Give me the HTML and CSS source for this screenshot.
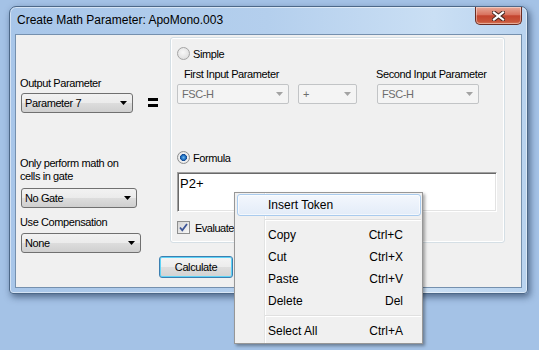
FILE: index.html
```html
<!DOCTYPE html>
<html>
<head>
	<meta charset="utf-8">
	<title>Create Math Parameter</title>
	<link rel="stylesheet" href="styles.css">
</head>
<body>
  <div class="window">
    <div class="titlebar">
      <span class="title">Create Math Parameter: ApoMono.003</span>
      <div class="close">
        <svg width="13" height="10" viewBox="0 0 13 10">
          <path d="M2 1.5 L11 8.5 M11 1.5 L2 8.5" stroke="#4a2a24" stroke-width="4.2" stroke-linecap="square"/>
          <path d="M2 1.5 L11 8.5 M11 1.5 L2 8.5" stroke="#fff" stroke-width="2.2" stroke-linecap="square"/>
        </svg>
      </div>
    </div>

    <div class="client">
      <div class="top_row">
        <div class="left_col">
          <div class="label output_label">Output Parameter</div>
          <div class="combo combo_output">Parameter 7</div>
          <div class="label gate_label">Only perform math on<br>cells in gate</div>
          <div class="combo combo_gate">No Gate</div>
          <div class="label comp_label">Use Compensation</div>
          <div class="combo combo_comp">None</div>
        </div>

        <div class="equals_col"><div class="equals"></div></div>

        <div class="group">
          <div class="radio_row">
            <span class="radio"></span>
            <span>Simple</span>
          </div>
          <div class="input_grid">
            <div class="label first_input">First Input Parameter</div>
            <div class="label second_input">Second Input Parameter</div>
            <div class="combo disabled">FSC-H</div>
            <div class="combo disabled">+</div>
            <div class="combo disabled">FSC-H</div>
          </div>
          <div class="radio_row formula_row">
            <span class="radio checked"></span>
            <span>Formula</span>
          </div>
          <div class="textbox">P2+</div>
          <div class="check_row">
            <span class="checkbox">
              <svg width="11" height="11" viewBox="0 0 11 11">
                <path d="M2 5.5 L4.3 8.3 L9 2" fill="none" stroke="#3d5597" stroke-width="1.8"/>
              </svg>
            </span>
            <span class="check_text">Evaluate</span>
          </div>
        </div>
      </div>

      <div class="button_row">
        <div class="btn">Calculate</div>
      </div>
    </div>
  </div>

  <!-- right click menu on the formula box -->
  <div class="menu">
    <div class="menu_item hover"><span>Insert Token</span></div>
    <div class="menu_sep"></div>
    <div class="menu_item"><span>Copy</span><span>Ctrl+C</span></div>
    <div class="menu_item"><span>Cut</span><span>Ctrl+X</span></div>
    <div class="menu_item"><span>Paste</span><span>Ctrl+V</span></div>
    <div class="menu_item"><span>Delete</span><span>Del</span></div>
    <div class="menu_sep"></div>
    <div class="menu_item"><span>Select All</span><span>Ctrl+A</span></div>
  </div>
</body>
</html>
```

FILE: styles.css
```css
body {
	margin: 0;
	width: 539px;
	height: 350px;
	overflow: hidden;
	position: relative;
	background-color: #a4c2e6;
	font-family: "Liberation Sans", Arial, sans-serif;
	color: #000;
}

/* window frame */
.window {
	position: absolute;
	left: 9px;
	top: 6px;
	width: 519px;
	height: 288px;
	box-sizing: border-box;
	border: 1px solid #4d6888;
	border-radius: 7px 7px 4px 4px;
	background: linear-gradient(to right, #a8c6e9 0%, #b4cfed 50%, #cadff4 82%, #b9d3ef 100%);
	box-shadow: 2px 3px 7px rgba(10, 30, 60, 0.55), inset 0 0 0 1px rgba(255, 255, 255, 0.5);
	display: flex;
	flex-direction: column;
}

.titlebar {
	height: 28px;
	display: flex;
	align-items: flex-start;
}

.title {
	margin: 6px 0 0 7px;
	font-size: 12px;
	line-height: 14px;
}

.close {
	margin-left: auto;
	margin-right: 5px;
	width: 47px;
	height: 18px;
	box-sizing: border-box;
	border: 1px solid #6b2c22;
	border-top: none;
	border-radius: 0 0 5px 5px;
	background: linear-gradient(#e7a897 0%, #d9735f 45%, #c4442e 52%, #c8553a 85%, #d87a5a 100%);
	box-shadow: inset 0 0 0 1px rgba(255, 255, 255, 0.4);
	display: flex;
	align-items: center;
	justify-content: center;
}

.client {
	margin: 0 6px;
	height: 252px;
	background-color: #f0f0f0;
	box-shadow: 0 0 0 1px #7590ae;
	display: flex;
	flex-direction: column;
	font-size: 11px;
	letter-spacing: -0.4px;
}

.top_row {
	display: flex;
	height: 218px;
}

.left_col {
	width: 131px;
	box-sizing: border-box;
	padding-left: 4px;
}

.label {
	line-height: 13px;
	white-space: nowrap;
}

.output_label { margin-top: 42px; }
.gate_label { margin-top: 44px; }
.comp_label { margin-top: 8px; }

/* combo boxes */
.combo {
	position: relative;
	height: 20px;
	box-sizing: border-box;
	border: 1px solid #707070;
	border-radius: 3px;
	padding-left: 3px;
	line-height: 18px;
	background: linear-gradient(#f2f2f2 0%, #ebebeb 50%, #dddddd 50%, #cfcfcf 100%);
	white-space: nowrap;
}

.combo::after {
	content: "";
	position: absolute;
	right: 5px;
	top: 7px;
	width: 7px;
	height: 4px;
	background: #000;
	clip-path: polygon(0 0, 100% 0, 50% 100%);
}

.combo_output { margin: 3px 0 0 1px; width: 112px; }
.combo_gate { margin: 5px 0 0 1px; width: 116px; }
.combo_comp { margin: 4px 0 0 1px; width: 120px; }

.combo.disabled {
	border-color: #c2c4c6;
	border-radius: 2px;
	background: #f4f4f4;
	color: #6d6d6d;
	padding-left: 4px;
}

.combo.disabled::after {
	background: #a3a3a3;
}

.equals_col {
	width: 23px;
}

.equals {
	margin: 63px 0 0 1px;
	width: 10px;
	height: 3px;
	border-top: 3px solid #000;
	border-bottom: 3px solid #000;
}

/* right hand group box */
.group {
	margin-top: 2px;
	width: 335px;
	height: 206px;
	box-sizing: border-box;
	border: 1px solid #d5dfe5;
	border-radius: 3px;
	box-shadow: inset 0 0 0 1px #fff;
	padding-left: 6px;
}

.radio_row {
	display: flex;
	align-items: center;
	gap: 3px;
	height: 13px;
	margin-top: 9px;
}

.formula_row { margin-top: 47px; }

.radio {
	width: 13px;
	height: 13px;
	box-sizing: border-box;
	border: 1px solid #a4a4a4;
	border-radius: 50%;
	background: radial-gradient(circle at 45% 40%, #f8f8f8 0%, #e6e6e6 55%, #d6d6d6 100%);
}

.radio.checked {
	border-color: #8e8f8f;
	background: radial-gradient(circle, #6fb8ee 0%, #1f6fc0 28%, #14488f 42%, #f2f2f2 48%, #d8d8d8 100%);
}

.input_grid {
	display: grid;
	grid-template-columns: 112px 59px 113px;
	column-gap: 9px;
	margin-top: 8px;
}

.input_grid .combo {
	margin-top: 3px;
}

.input_grid .combo:nth-child(5) {
	margin-left: 11px;
}

.first_input {
	grid-column: 1 / 3;
	margin-left: 7px;
}

.second_input {
	margin-left: 10px;
}

.textbox {
	margin-top: 8px;
	width: 320px;
	height: 40px;
	box-sizing: border-box;
	border: 1px solid;
	border-color: #a0a0a0 #fff #fff #a0a0a0;
	box-shadow: inset 1px 1px #696969, inset -1px -1px #e3e3e3;
	background: #fff;
	padding: 3px 2px;
	font-size: 13px;
	line-height: 15px;
	letter-spacing: 0;
}

.check_row {
	display: flex;
	align-items: center;
	gap: 5px;
	margin-top: 9px;
	height: 13px;
}

.check_text {
	white-space: nowrap;
	letter-spacing: -0.5px;
}

.checkbox {
	width: 13px;
	height: 13px;
	box-sizing: border-box;
	border: 1px solid #8e8f8f;
	background: linear-gradient(135deg, #d4d4d4, #f8f8f8);
	display: flex;
	align-items: center;
	justify-content: center;
}

.button_row {
	padding-left: 143px;
	margin-top: 3px;
}

.btn {
	width: 74px;
	height: 22px;
	box-sizing: border-box;
	border: 1px solid #3c7fb1;
	border-radius: 3px;
	box-shadow: inset 0 0 0 1px #5fd3f6;
	background: linear-gradient(#f4f4f4 0%, #ececec 50%, #dedede 50%, #d2d2d2 100%);
	text-align: center;
	line-height: 20px;
}

/* context menu */
.menu {
	position: absolute;
	left: 234px;
	top: 192px;
	width: 189px;
	box-sizing: border-box;
	border: 1px solid #979797;
	padding: 1px 1px 1px 2px;
	background-color: #f0f0f0;
	background-image: linear-gradient(to right, transparent 29px, #e2e3e3 29px, #e2e3e3 30px, #fff 30px, #fff 31px, transparent 31px);
	box-shadow: 2px 2px 3px rgba(0, 0, 0, 0.35);
	font-size: 12px;
}

.menu_item {
	height: 22px;
	box-sizing: border-box;
	border: 1px solid transparent;
	border-radius: 3px;
	padding: 0 17px 0 30px;
	display: flex;
	justify-content: space-between;
	align-items: center;
}

.menu_item.hover {
	border-color: #a9cbee;
	background: linear-gradient(#f3f7fd, #e3ecf8);
	box-shadow: inset 0 0 0 1px rgba(255, 255, 255, 0.6);
}

.menu_sep {
	height: 8px;
	margin-left: 28px;
}

.menu_sep::before {
	content: "";
	display: block;
	padding-top: 3px;
	border-bottom: 1px solid #e0e0e0;
	box-shadow: 0 1px 0 #fff;
}
```
